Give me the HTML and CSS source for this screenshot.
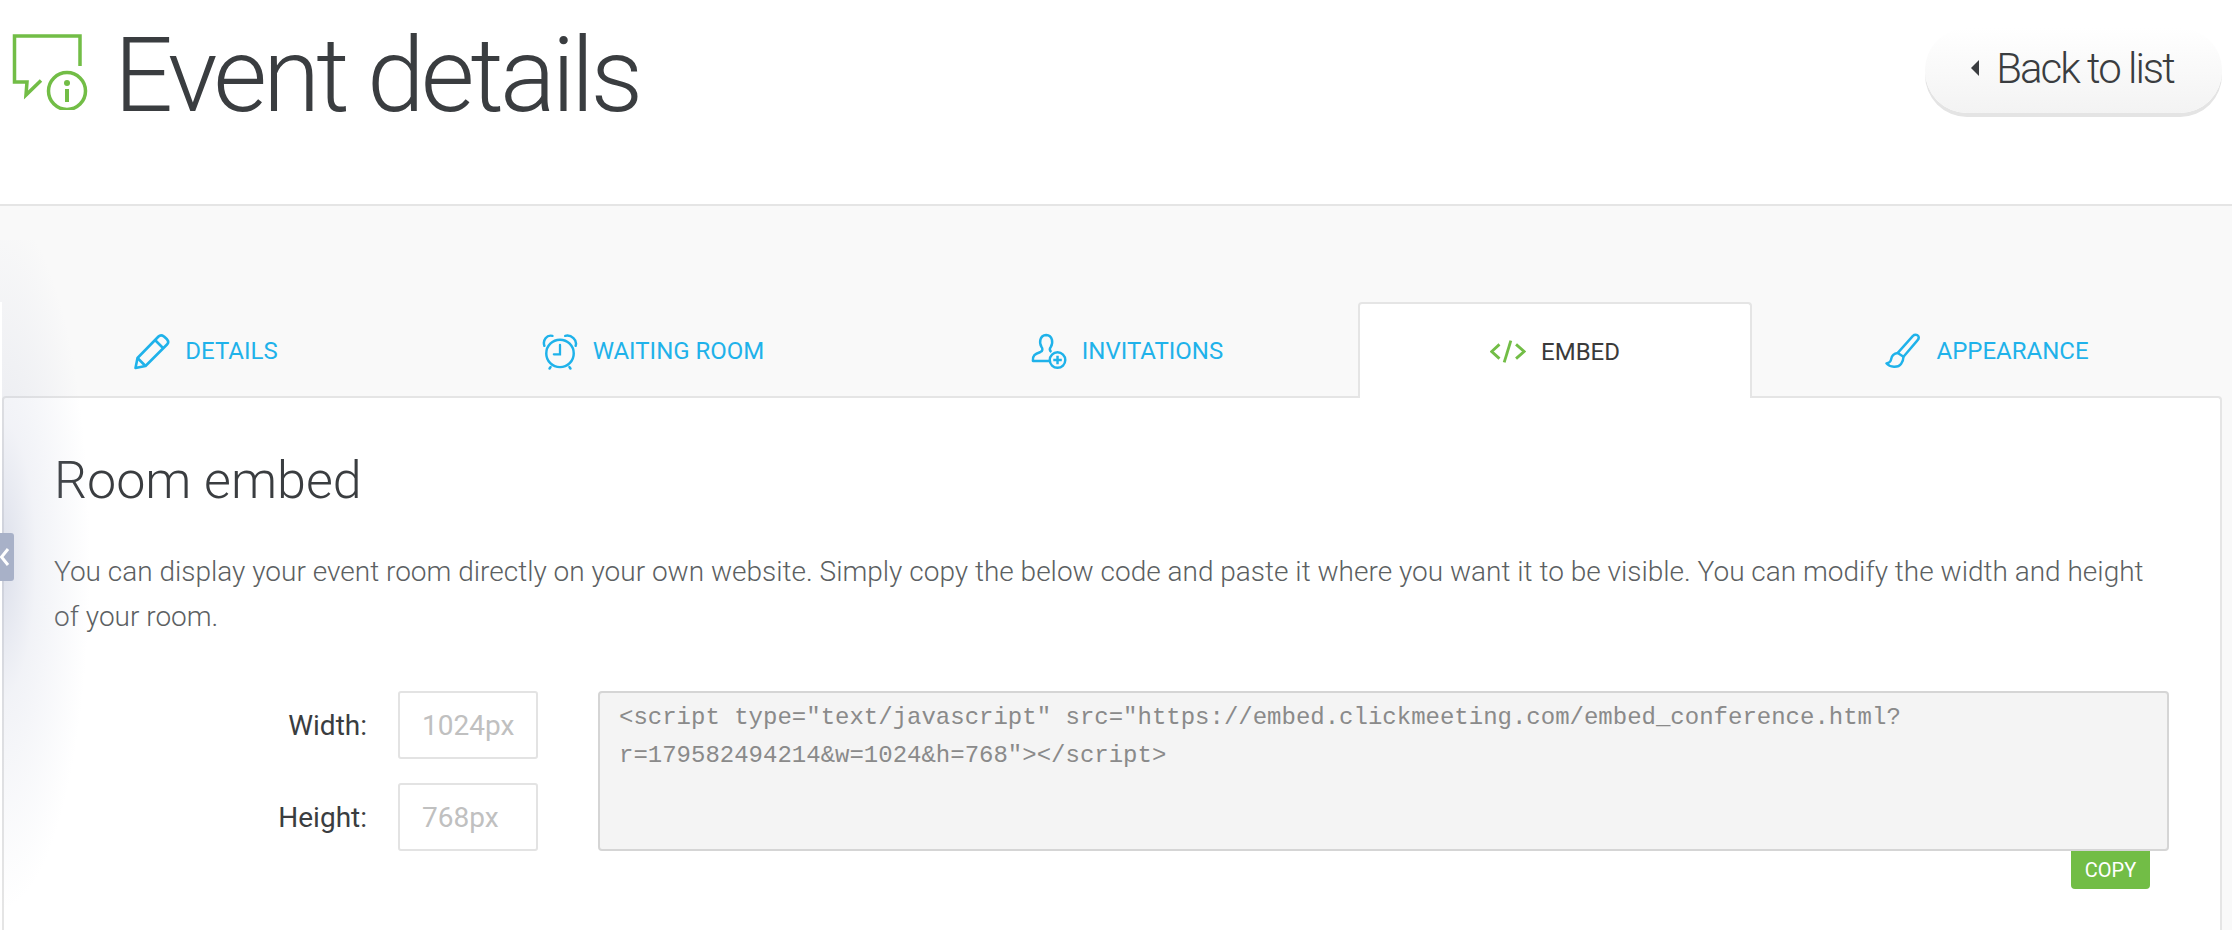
FILE: index.html
```html
<!DOCTYPE html>
<html lang="en">
<head>
<meta charset="utf-8">
<title>Event details</title>
<link rel="stylesheet" href="styles.css">
</head>
<body>
<header class="header">
  <div class="title-wrap">
    <svg class="title-icon" viewBox="0 0 90 90" fill="none" stroke="#72bd46">
      <path d="M80 46V16H14.500V62H27L26 75L41 60.500" stroke-width="3.500"/>
      <circle cx="67" cy="71" r="18.500" stroke-width="3.500"/>
      <circle cx="67" cy="63" r="3" fill="#72bd46" stroke="none"/>
      <path d="M67 69V82" stroke-width="4"/>
    </svg>
    <h1 class="title">Event details</h1>
  </div>
  <a class="back"><span class="back-arrow"></span>Back to list</a>
</header>
<main class="main">
  <nav class="tabs">
    <a class="tab">
      <svg class="tab-icon" viewBox="0 0 36 36" fill="none" stroke="#1fb2ea" stroke-width="2.600" stroke-linejoin="round">
        <path d="M1.500 34.500L3.500 24.500L24.500 3C26 1.500 28 1.500 30 3L33 5.800C34.500 7.500 34.500 9.500 33 11L11.500 32.500Z"/>
        <path d="M3.500 24.500L11.500 32.500M21 6.500L29.500 15"/>
      </svg>
      DETAILS
    </a>
    <a class="tab">
      <svg class="tab-icon" viewBox="0 0 38 38" fill="none" stroke="#1fb2ea" stroke-width="2.600" stroke-linecap="round">
        <circle cx="19" cy="21" r="14.500"/>
        <path d="M19 12V22H12.500" stroke-width="2.400"/>
        <path d="M2.500 13C.5 7 5 1 11 2.500M24.500 2.500C31 1 37.500 7 35.500 13"/>
        <path d="M9 35.500L8 37M29 35.500L30 37"/>
      </svg>
      WAITING ROOM
    </a>
    <a class="tab">
      <svg class="tab-icon" viewBox="0 0 38 38" fill="none" stroke="#1fb2ea" stroke-width="2.600" stroke-linejoin="round">
        <path d="M21 29H2C1.500 23 4 21.500 10 19.500C12.500 18.500 12.500 16 11 14C8.500 10 9 2 16 1.500C23 2 23.500 10 21 14C19.500 16 19.500 18 21.500 19.500"/>
        <circle cx="28" cy="28" r="8.200"/>
        <path d="M28 23.500V32.500M23.500 28H32.500" stroke-width="2.600"/>
      </svg>
      INVITATIONS
    </a>
    <a class="tab tab-active">
      <svg class="tab-icon tab-icon-code" viewBox="0 0 38 26" fill="none" stroke="#72bd46" stroke-width="3">
        <path d="M10 5L1.800 12.500L10 20M27.500 5L36 12.500L27.500 20"/>
        <path d="M22 1L15 24"/>
      </svg>
      EMBED
    </a>
    <a class="tab">
      <svg class="tab-icon" viewBox="0 0 38 38" fill="none" stroke="#1fb2ea" stroke-width="2.600" stroke-linejoin="round">
        <path d="M29.500 2.500C31 1 34 1 35 2.500C36 4 35.500 6 34 7.500L19.500 24.500L13.500 20.500Z"/>
        <path d="M13.500 20.500C8.500 21 7 24 6.500 27C6 30 4.500 31 1.500 31.500C5 36 14 36.500 17 32C19 29 19.500 26.500 19.500 24.500"/>
      </svg>
      APPEARANCE
    </a>
  </nav>
  <section class="panel">
    <h2 class="panel-title">Room embed</h2>
    <p class="panel-text">You can display your event room directly on your own website. Simply copy the below code and paste it where you want it to be visible. You can modify the width and height of your room.</p>
    <div class="embed">
      <div class="fields">
        <label class="field"><span class="field-label">Width:</span><span class="field-input">1024px</span></label>
        <label class="field"><span class="field-label">Height:</span><span class="field-input">768px</span></label>
      </div>
      <div class="code-wrap">
        <div class="code">&lt;script type="text/javascript" src="https://embed.clickmeeting.com/embed_conference.html?<br>r=179582494214&amp;w=1024&amp;h=768"&gt;&lt;/script&gt;</div>
        <a class="copy">COPY</a>
      </div>
    </div>
  </section>
</main>
<div class="side-shadow"></div>
<div class="side-strip"></div>
<a class="side-handle">
  <svg viewBox="0 0 14 48" width="14" height="48" fill="none" stroke="#fff" stroke-width="3"><path d="M8 16L1.500 24L8 32"/></svg>
</a>
</body>
</html>
```
FILE: styles.css
```css
* { box-sizing: border-box; }
html, body { margin: 0; height: 930px; overflow: hidden; }
body {
  position: relative;
  background: #f9f9f9;
  font-family: Roboto, "Liberation Sans", sans-serif;
  color: #3a3d40;
}
.header {
  height: 206px;
  background: #fff;
  border-bottom: 2px solid #e5e5e5;
  display: flex;
  justify-content: space-between;
  align-items: flex-start;
  padding: 28px 10px 0 0;
}
.title-wrap { display: flex; align-items: flex-start; }
.title-icon { width: 90px; height: 90px; margin: -8px 0 0 0; flex: none; }
.title {
  margin: -13px 0 0 24px;
  font-size: 104px;
  line-height: 122px;
  font-weight: 300;
  letter-spacing: -4px;
  color: #3a3d40;
}
.back {
  width: 297px;
  height: 85px;
  padding: 0 2px 5px 0;
  border-radius: 42px;
  background: linear-gradient(#fff, #f3f3f3);
  box-shadow: 0 4px 0 #e4e4e4;
  display: flex;
  align-items: center;
  justify-content: center;
  font-size: 42px;
  font-weight: 300;
  color: #3a3d40;
  letter-spacing: -2px;
}
.back-arrow {
  width: 0;
  height: 0;
  border-style: solid;
  border-width: 8px 8px 8px 0;
  border-color: transparent #3a3d40 transparent transparent;
  margin-right: 17px;
}
.main { padding: 96px 10px 0 2px; }
.tabs {
  display: grid;
  grid-template-columns: 408px 486px 462px 394px 470px;
  height: 94px;
}
.tab {
  display: flex;
  align-items: center;
  justify-content: center;
  gap: 15px;
  padding-top: 2px;
  font-size: 24px;
  color: #1fb2ea;
}
.tab-active {
  background: #fff;
  border: 2px solid #e5e5e5;
  border-bottom: 0;
  border-radius: 4px 4px 0 0;
  color: #3a3a3a;
  position: relative;
  z-index: 1;
  height: 96px;
}
.tab-icon { width: 36px; height: 37px; flex: none; }
.tab-icon-code { height: 26px; }
.panel {
  background: #fff;
  border: 2px solid #e5e5e5;
  border-bottom: 0;
  border-radius: 4px 4px 0 0;
  height: 536px;
  padding: 51px 50px 0 50px;
}
.panel-title {
  margin: 0;
  font-size: 52px;
  line-height: 64px;
  font-weight: 300;
  color: #3a3d40;
}
.panel-text {
  margin: 36px 0 0;
  font-size: 28px;
  line-height: 45px;
  font-weight: 300;
  color: #5c5f62;
}
.embed { display: flex; margin-top: 52px; }
.fields {
  width: 544px;
  flex: none;
  display: flex;
  flex-direction: column;
  gap: 24px;
}
.field { display: flex; justify-content: flex-end; align-items: center; gap: 31px; padding-right: 60px; }
.field-label { font-size: 28px; color: #3a3d40; }
.field-input {
  width: 140px;
  height: 68px;
  border: 2px solid #e3e3e3;
  border-radius: 3px;
  padding-left: 22px;
  display: flex;
  align-items: center;
  font-size: 28px;
  font-weight: 400;
  color: #c0c0c0;
}
.code-wrap { width: 1571px; display: flex; flex-direction: column; align-items: flex-end; }
.code {
  width: 100%;
  height: 160px;
  background: #f4f4f4;
  border: 2px solid #d5d5d5;
  border-radius: 4px;
  padding: 6px 19px;
  font-family: "Liberation Mono", monospace;
  font-size: 24px;
  line-height: 37.500px;
  color: #8a8a8a;
}
.copy {
  width: 79px;
  height: 38px;
  margin-right: 19px;
  background: #72bd46;
  border-radius: 0 0 4px 4px;
  color: #fff;
  font-size: 20px;
  display: flex;
  align-items: center;
  justify-content: center;
}
.side-shadow {
  position: absolute;
  left: 0;
  top: 240px;
  width: 120px;
  height: 690px;
  background: radial-gradient(ellipse 90px 350px at 0 320px, rgba(170, 178, 205, .42), rgba(170, 178, 205, .16) 40%, rgba(170, 178, 205, 0) 100%);
  pointer-events: none;
}
.side-strip {
  position: absolute;
  left: 0;
  top: 302px;
  width: 2px;
  height: 628px;
  background: #fff;
}
.side-handle {
  position: absolute;
  left: 0;
  top: 533px;
  width: 14px;
  height: 48px;
  background: #a8b1c8;
  border-radius: 0 3px 3px 0;
}
.side-handle svg { display: block; }
```
